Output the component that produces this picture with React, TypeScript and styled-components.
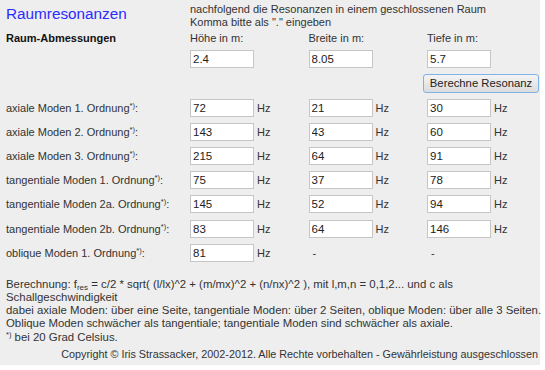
import React from 'react';
import styled, { createGlobalStyle } from 'styled-components';

const GlobalStyle = createGlobalStyle`
  body {
    margin: 0;
    background: #ffffff;
  }
`;

type ModeRow = {
  label: string;
  values: (string | null)[];
};

const dimensions = [
  { label: 'Höhe in m:', value: '2.4' },
  { label: 'Breite in m:', value: '8.05' },
  { label: 'Tiefe in m:', value: '5.7' },
];

const modes: ModeRow[] = [
  { label: 'axiale Moden 1. Ordnung', values: ['72', '21', '30'] },
  { label: 'axiale Moden 2. Ordnung', values: ['143', '43', '60'] },
  { label: 'axiale Moden 3. Ordnung', values: ['215', '64', '91'] },
  { label: 'tangentiale Moden 1. Ordnung', values: ['75', '37', '78'] },
  { label: 'tangentiale Moden 2a. Ordnung', values: ['145', '52', '94'] },
  { label: 'tangentiale Moden 2b. Ordnung', values: ['83', '64', '146'] },
  { label: 'oblique Moden 1. Ordnung', values: ['81', null, null] },
];

const App: React.FC = () => {
  return (
    <>
      <GlobalStyle />
      <Panel>
        <Header>
          <Title>Raumresonanzen</Title>
          <Intro>
            nachfolgend die Resonanzen in einem geschlossenen Raum
            <br />
            Komma bitte als "." eingeben
          </Intro>
        </Header>

        <Form>
          <SectionLabel>Raum-Abmessungen</SectionLabel>
          {dimensions.map((d) => (
            <DimLabel key={d.label}>{d.label}</DimLabel>
          ))}

          <RowLabel />
          {dimensions.map((d) => (
            <React.Fragment key={d.label}>
              <Field defaultValue={d.value} />
              <Unit />
            </React.Fragment>
          ))}

          <ButtonCell>
            <CalcButton type="button">Berechne Resonanz</CalcButton>
          </ButtonCell>

          {modes.map((row) => (
            <React.Fragment key={row.label}>
              <RowLabel>
                {row.label}
                <Sup>*)</Sup>:
              </RowLabel>
              {row.values.map((v, i) =>
                v === null ? (
                  <React.Fragment key={i}>
                    <Dash>-</Dash>
                    <Unit />
                  </React.Fragment>
                ) : (
                  <React.Fragment key={i}>
                    <Field defaultValue={v} readOnly />
                    <Unit>Hz</Unit>
                  </React.Fragment>
                )
              )}
            </React.Fragment>
          ))}
        </Form>

        <Notes>
          <Line>
            Berechnung: f<Sub>res</Sub> = c/2 * sqrt( (l/lx)^2 + (m/mx)^2 + (n/nx)^2 ), mit l,m,n = 0,1,2... und c als
          </Line>
          <Line>Schallgeschwindigkeit</Line>
          <Line>
            dabei axiale Moden: über eine Seite, tangentiale Moden: über 2 Seiten, oblique Moden: über alle 3 Seiten.
          </Line>
          <Line>Oblique Moden schwächer als tangentiale; tangentiale Moden sind schwächer als axiale.</Line>
          <Line>
            <Sup>*)</Sup> bei 20 Grad Celsius.
          </Line>
        </Notes>

        <Copyright>
          Copyright © Iris Strassacker, 2002-2012. Alle Rechte vorbehalten - Gewährleistung ausgeschlossen
        </Copyright>
      </Panel>
    </>
  );
};

const columns = '184px 64px 54.5px 64px 54.5px 64px 1fr';

const Panel = styled.div`
  width: 540px;
  height: 365px;
  box-sizing: border-box;
  padding: 2px 0 0 6px;
  background: #eeeeee;
  font-family: 'Liberation Sans', Arial, sans-serif;
  font-size: 11px;
  color: #333333;
`;

const Header = styled.div`
  display: grid;
  grid-template-columns: 184px 1fr;
  height: 29px;
`;

const Title = styled.h1`
  margin: 3px 0 0;
  font-size: 15.3px;
  font-weight: normal;
  line-height: 18px;
  color: #2b2bff;
`;

const Intro = styled.div`
  line-height: 13px;
  padding-top: 1px;
`;

const Form = styled.div`
  display: grid;
  grid-template-columns: ${columns};
  grid-template-rows: 13px 18px 18px;
  grid-auto-rows: 18px;
  row-gap: 6.2px;
  align-items: center;
`;

const SectionLabel = styled.div`
  font-weight: bold;
  color: #111111;
`;

const DimLabel = styled.div`
  grid-column: span 2;
`;

const RowLabel = styled.div`
  grid-column: 1;
  white-space: nowrap;
`;

const Field = styled.input`
  width: 64px;
  height: 18px;
  box-sizing: border-box;
  margin: 0;
  padding: 0 2px;
  border: 1px solid #c6c6c6;
  background: #ffffff;
  font-family: 'Liberation Sans', Arial, sans-serif;
  font-size: 11.5px;
  color: #222222;
  outline: none;
`;

const Unit = styled.div`
  padding-left: 3px;
`;

const Dash = styled.div`
  padding-left: 4px;
`;

const ButtonCell = styled.div`
  grid-column: 6 / 8;
  height: 19px;
`;

const CalcButton = styled.button`
  margin-left: -4px;
  height: 19px;
  width: 116px;
  padding: 0;
  border: 1px solid #7fb2e8;
  border-radius: 3px;
  background: linear-gradient(#f4f4f4, #dcdcdc);
  font-family: 'Liberation Sans', Arial, sans-serif;
  font-size: 11.3px;
  color: #222222;
`;

const Sup = styled.sup`
  font-size: 7.5px;
  vertical-align: 4px;
  line-height: 0;
`;

const Sub = styled.sub`
  font-size: 8px;
  vertical-align: -2px;
  line-height: 0;
`;

const Notes = styled.div`
  margin-top: 16px;
  font-size: 11.4px;
  line-height: 13.2px;
`;

const Line = styled.div`
  white-space: nowrap;
`;

const Copyright = styled.div`
  margin-top: 4px;
  padding-right: 2px;
  font-size: 10.8px;
  line-height: 13px;
  text-align: right;
  white-space: nowrap;
`;

export default App;
